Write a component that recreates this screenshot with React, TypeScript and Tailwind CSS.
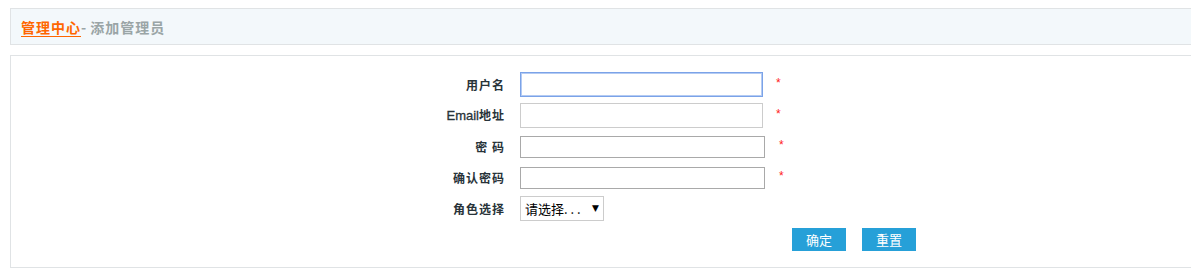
import React from "react";

const font = { fontFamily: '"Noto Sans CJK SC", "Liberation Sans", sans-serif' };

function Row({
  label,
  children,
  mt,
}: {
  label: React.ReactNode;
  children: React.ReactNode;
  mt: string;
}) {
  return (
    <div className={`flex items-center ${mt}`}>
      <div className="w-[75px] text-right text-[12px] font-bold leading-none tracking-[1px] text-[#283339]">{label}</div>
      <div className="ml-[15px] flex items-center">{children}</div>
    </div>
  );
}

function Star({ ml }: { ml: string }) {
  return (
    <span className={`${ml} mb-[4px] text-[12px] leading-none text-[#ff2020]`} style={{ fontFamily: '"Liberation Sans", sans-serif' }}>
      *
    </span>
  );
}

export default function App() {
  return (
    <div className="w-[1191px] h-[268px] overflow-hidden bg-white" style={font}>
      <div className="ml-[10px] mt-[8px] w-[1200px] h-[37px] border border-[#e0e3e5] bg-[#f3f8fb] flex items-center pl-[10px]">
        <span className="text-[14px] font-bold tracking-[1px] text-[#ff6600] underline underline-offset-[3px] leading-none">管理中心</span>
        <span className="text-[14px] font-bold text-[#9aa5a6] leading-none">-</span>
        <span className="ml-[4px] text-[14px] font-bold tracking-[1px] text-[#9aa5a6] leading-none">添加管理员</span>
      </div>
      <div className="ml-[10px] mt-[10px] w-[1200px] h-[213px] border border-[#e0e3e5] bg-white">
        <div className="ml-[419px] pt-[16px]">
          <Row label="用户名" mt="">
            <div className="w-[243px] h-[25px] border border-[#7ba3e8] shadow-[inset_0_0_0_1px_#b4cbf3] bg-white" />
            <Star ml="ml-[13px]" />
          </Row>
          <Row
            label={
              <>
                <span className="tracking-normal font-normal [-webkit-text-stroke:0.3px_#283339]" style={{ fontFamily: '"Liberation Sans", sans-serif', fontSize: "13px" }}>Email</span>
                地址
              </>
            }
            mt="mt-[6px]"
          >
            <div className="w-[243px] h-[25px] border border-[#cccccc] bg-white" />
            <Star ml="ml-[13px]" />
          </Row>
          <Row label="密 码" mt="mt-[8px]">
            <div className="w-[245px] h-[22px] border border-[#a9a9a9] bg-white" />
            <Star ml="ml-[14px]" />
          </Row>
          <Row label="确认密码" mt="mt-[9px]">
            <div className="w-[245px] h-[22px] border border-[#a9a9a9] bg-white" />
            <Star ml="ml-[14px]" />
          </Row>
          <Row label="角色选择" mt="mt-[7px]">
            <div className="w-[84px] h-[25px] border border-[#cccccc] bg-white flex items-center pl-[4px] pr-[4px] text-[13px] text-black">
              <span className="leading-none">请选择. . .</span>
              <span className="ml-auto text-[9px] leading-none" style={{ fontFamily: '"DejaVu Sans", sans-serif' }}>▼</span>
            </div>
          </Row>
          <div className="flex mt-[7px] ml-[362px] gap-[16px]">
            <button className="w-[54px] h-[23px] bg-[#26a0d8] text-white text-[13px] leading-none">确定</button>
            <button className="w-[54px] h-[23px] bg-[#26a0d8] text-white text-[13px] leading-none">重置</button>
          </div>
        </div>
      </div>
    </div>
  );
}
